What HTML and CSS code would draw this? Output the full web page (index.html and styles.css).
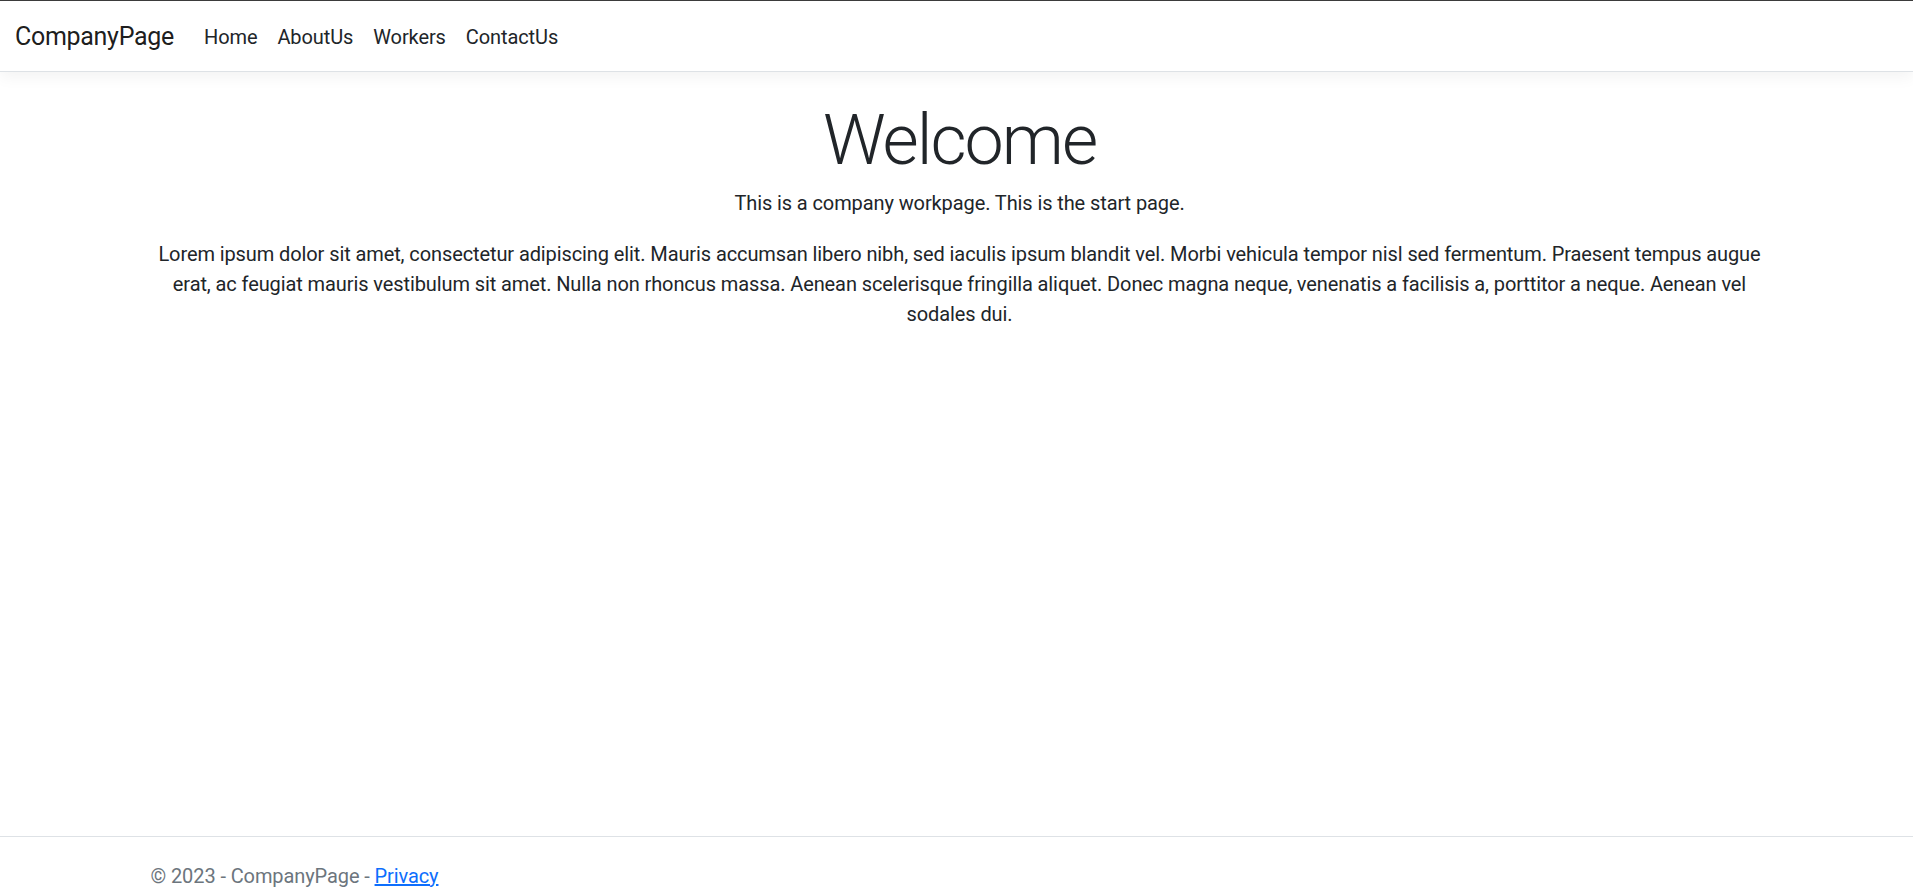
FILE: index.html
```html
<!DOCTYPE html>
<html lang="en">
<head>
<meta charset="utf-8">
<title>Home Page - CompanyPage</title>
<link rel="stylesheet" href="styles.css">
</head>
<body>
<div class="page">
  <header class="site-header">
    <nav class="navbar">
      <div class="container-fluid">
        <a class="navbar-brand" href="#">CompanyPage</a>
        <ul class="navbar-nav">
          <li><a class="nav-link" href="#">Home</a></li>
          <li><a class="nav-link" href="#">AboutUs</a></li>
          <li><a class="nav-link" href="#">Workers</a></li>
          <li><a class="nav-link" href="#">ContactUs</a></li>
        </ul>
      </div>
    </nav>
  </header>
  <main class="container main">
    <div class="text-center">
      <h1 class="display-4">Welcome</h1>
      <p>This is a company workpage. This is the start page.</p>
      <p>Lorem ipsum dolor sit amet, consectetur adipiscing elit. Mauris accumsan libero nibh, sed iaculis ipsum blandit vel. Morbi vehicula tempor nisl sed fermentum. Praesent tempus augue erat, ac feugiat mauris vestibulum sit amet. Nulla non rhoncus massa. Aenean scelerisque fringilla aliquet. Donec magna neque, venenatis a facilisis a, porttitor a neque. Aenean vel sodales dui.</p>
    </div>
  </main>
  <footer class="footer">
    <div class="container footer-inner">
      &copy; 2023 - CompanyPage - <a href="#">Privacy</a>
    </div>
  </footer>
</div>
</body>
</html>
```

FILE: styles.css
```css
*, *::before, *::after { box-sizing: border-box; }

html { font-size: 20px; }

body {
  margin: 0;
  font-family: "Segoe UI", Roboto, "Liberation Sans", Arial, sans-serif;
  font-size: 1rem;
  line-height: 1.5;
  letter-spacing: -0.1px;
  color: #212529;
  background: #fff;
  border-top: 1px solid #3b3b3b;
}

.page {
  display: flex;
  flex-direction: column;
  min-height: 913px;
}

.site-header { flex: none; }

.navbar {
  background: #fff;
  border-bottom: 1px solid #dee2e6;
  box-shadow: 0 5px 15px rgba(0, 0, 0, .05);
  padding: 11px 0 9px;
  margin-bottom: 20px;
}

.container-fluid {
  display: flex;
  align-items: center;
  padding: 0 15px;
}

.navbar-brand {
  font-size: 25px;
  line-height: 1.5;
  letter-spacing: -0.3px;
  padding: 4px 0;
  margin-right: 20px;
  color: rgba(0, 0, 0, .9);
  text-decoration: none;
  white-space: nowrap;
}

.navbar-nav {
  display: flex;
  list-style: none;
  margin: 0;
  padding: 0;
}

.nav-link {
  display: block;
  padding: 10px;
  color: #212529;
  text-decoration: none;
}

.container {
  width: 100%;
  max-width: 1650px;
  margin: 0 auto;
  padding: 0 12px 0 18px;
}

.main { flex: 1 0 auto; padding-bottom: 20px; }

.text-center { text-align: center; }

.display-4 {
  font-size: 70px;
  font-weight: 300;
  line-height: 1.2;
  letter-spacing: -2px;
  margin: 0 0 5px;
  padding-top: 6px;
}

p { margin: 0 0 20px; padding-top: 1px; }

.footer {
  flex: none;
  border-top: 1px solid #dee2e6;
  line-height: 75px;
  white-space: nowrap;
  color: #6c757d;
}

.footer-inner { padding-top: 2px; padding-left: 19px; }

.footer a { color: #0d6efd; }
```
